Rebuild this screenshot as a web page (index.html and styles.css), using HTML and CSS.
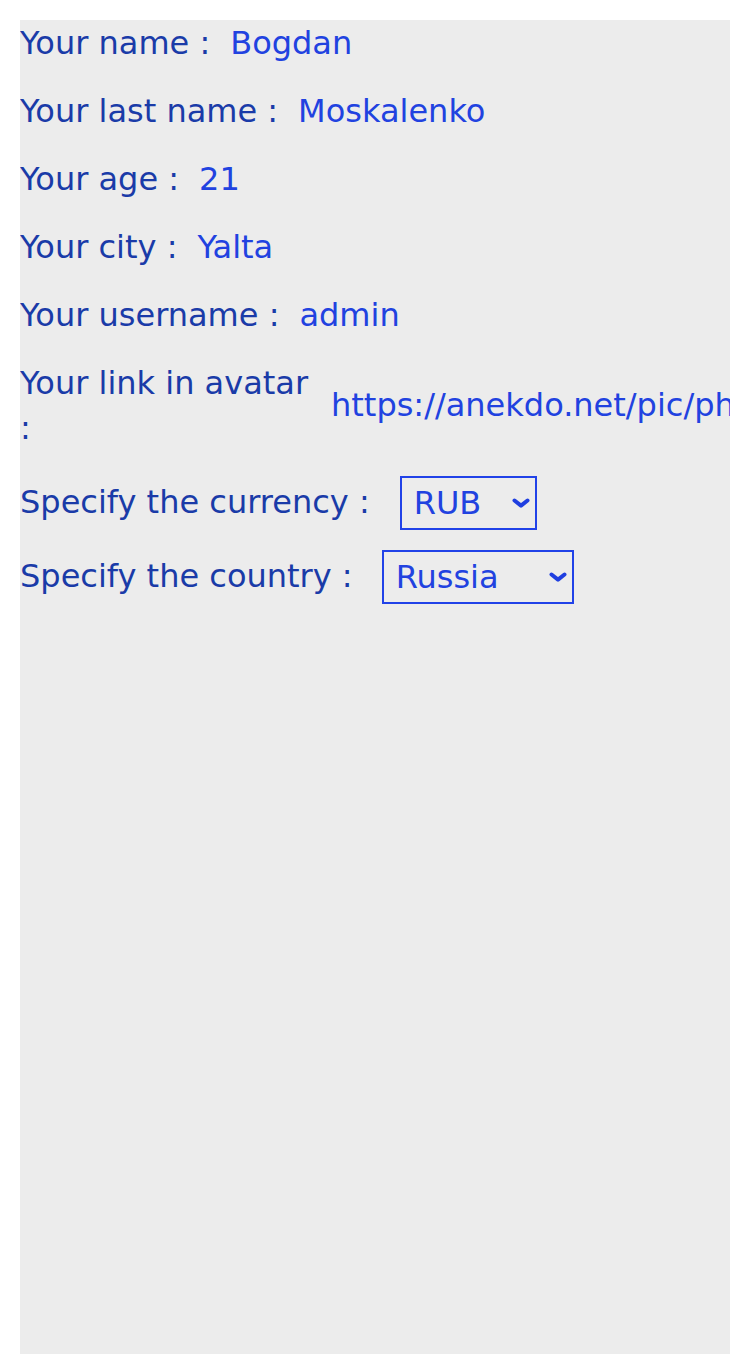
FILE: index.html
```html
<!DOCTYPE html>
<html lang="en">
<head>
<meta charset="utf-8">
<title>Profile</title>
<link rel="stylesheet" href="styles.css">
</head>
<body>
<div class="page">
  <div class="panel">
    <div class="row">
      <span class="label">Your name :</span>
      <span class="value">Bogdan</span>
    </div>
    <div class="row">
      <span class="label">Your last name :</span>
      <span class="value">Moskalenko</span>
    </div>
    <div class="row">
      <span class="label">Your age :</span>
      <span class="value">21</span>
    </div>
    <div class="row">
      <span class="label">Your city :</span>
      <span class="value">Yalta</span>
    </div>
    <div class="row">
      <span class="label">Your username :</span>
      <span class="value">admin</span>
    </div>
    <div class="row row-avatar">
      <span class="label label-avatar">Your link in avatar :</span>
      <span class="value value-url">https://anekdo.net/pic/photo/avatar-admin.jpg</span>
    </div>
    <div class="row row-currency">
      <span class="label">Specify the currency :</span>
      <span class="select-wrap select-currency">
        <select class="select">
          <option>RUB</option>
          <option>USD</option>
          <option>EUR</option>
        </select>
        <svg class="chevron" viewBox="0 0 18 10" width="18" height="10" aria-hidden="true">
          <path d="M2.5 2.5 L9 7.6 L15.5 2.5" fill="none" stroke="#1f3fe0" stroke-width="4" stroke-linecap="round" stroke-linejoin="round"/>
        </svg>
      </span>
    </div>
    <div class="row row-country">
      <span class="label">Specify the country :</span>
      <span class="select-wrap select-country">
        <select class="select">
          <option>Russia</option>
          <option>Ukraine</option>
          <option>Belarus</option>
        </select>
        <svg class="chevron" viewBox="0 0 18 10" width="18" height="10" aria-hidden="true">
          <path d="M2.5 2.5 L9 7.6 L15.5 2.5" fill="none" stroke="#1f3fe0" stroke-width="4" stroke-linecap="round" stroke-linejoin="round"/>
        </svg>
      </span>
    </div>
  </div>
</div>
</body>
</html>
```
FILE: styles.css
```css
html, body {
  margin: 0;
  padding: 0;
  background: #ffffff;
  overflow: hidden;
}

.page {
  padding: 20px 0 0 20px;
  height: 100vh;
  box-sizing: border-box;
}

.panel {
  background: #ececec;
  height: 100%;
  overflow: hidden;
  padding-top: 1px;
  box-sizing: border-box;
  font-family: "DejaVu Sans", sans-serif;
  font-size: 32px;
  line-height: 1.4;
}

.row {
  display: flex;
  align-items: center;
  gap: 20px;
  margin-bottom: 23.2px;
  white-space: nowrap;
}

.label {
  color: #1a3ba8;
  flex: none;
}

.value {
  color: #2142e0;
}

.label-avatar {
  width: 291px;
  white-space: normal;
}

.value-url {
  flex: none;
}

.row-avatar {
  margin-bottom: 25px;
}

.row-currency {
  margin-bottom: 20px;
}

.select-wrap {
  position: relative;
  display: inline-block;
  flex: none;
}

.select-currency {
  margin-left: 10px;
}

.select-country {
  margin-left: 9px;
}

.select {
  appearance: none;
  -webkit-appearance: none;
  display: block;
  box-sizing: border-box;
  height: 54px;
  margin: 0;
  padding: 0 0 0 12px;
  border: 2px solid #2142e8;
  border-radius: 0;
  background: transparent;
  color: #2142e0;
  font-family: "DejaVu Sans", sans-serif;
  font-size: 32px;
  line-height: 50px;
}

.select-currency .select {
  width: 137px;
}

.select-country .select {
  width: 192px;
}

.chevron {
  position: absolute;
  right: 7px;
  top: 50%;
  margin-top: -5px;
  pointer-events: none;
}
```
